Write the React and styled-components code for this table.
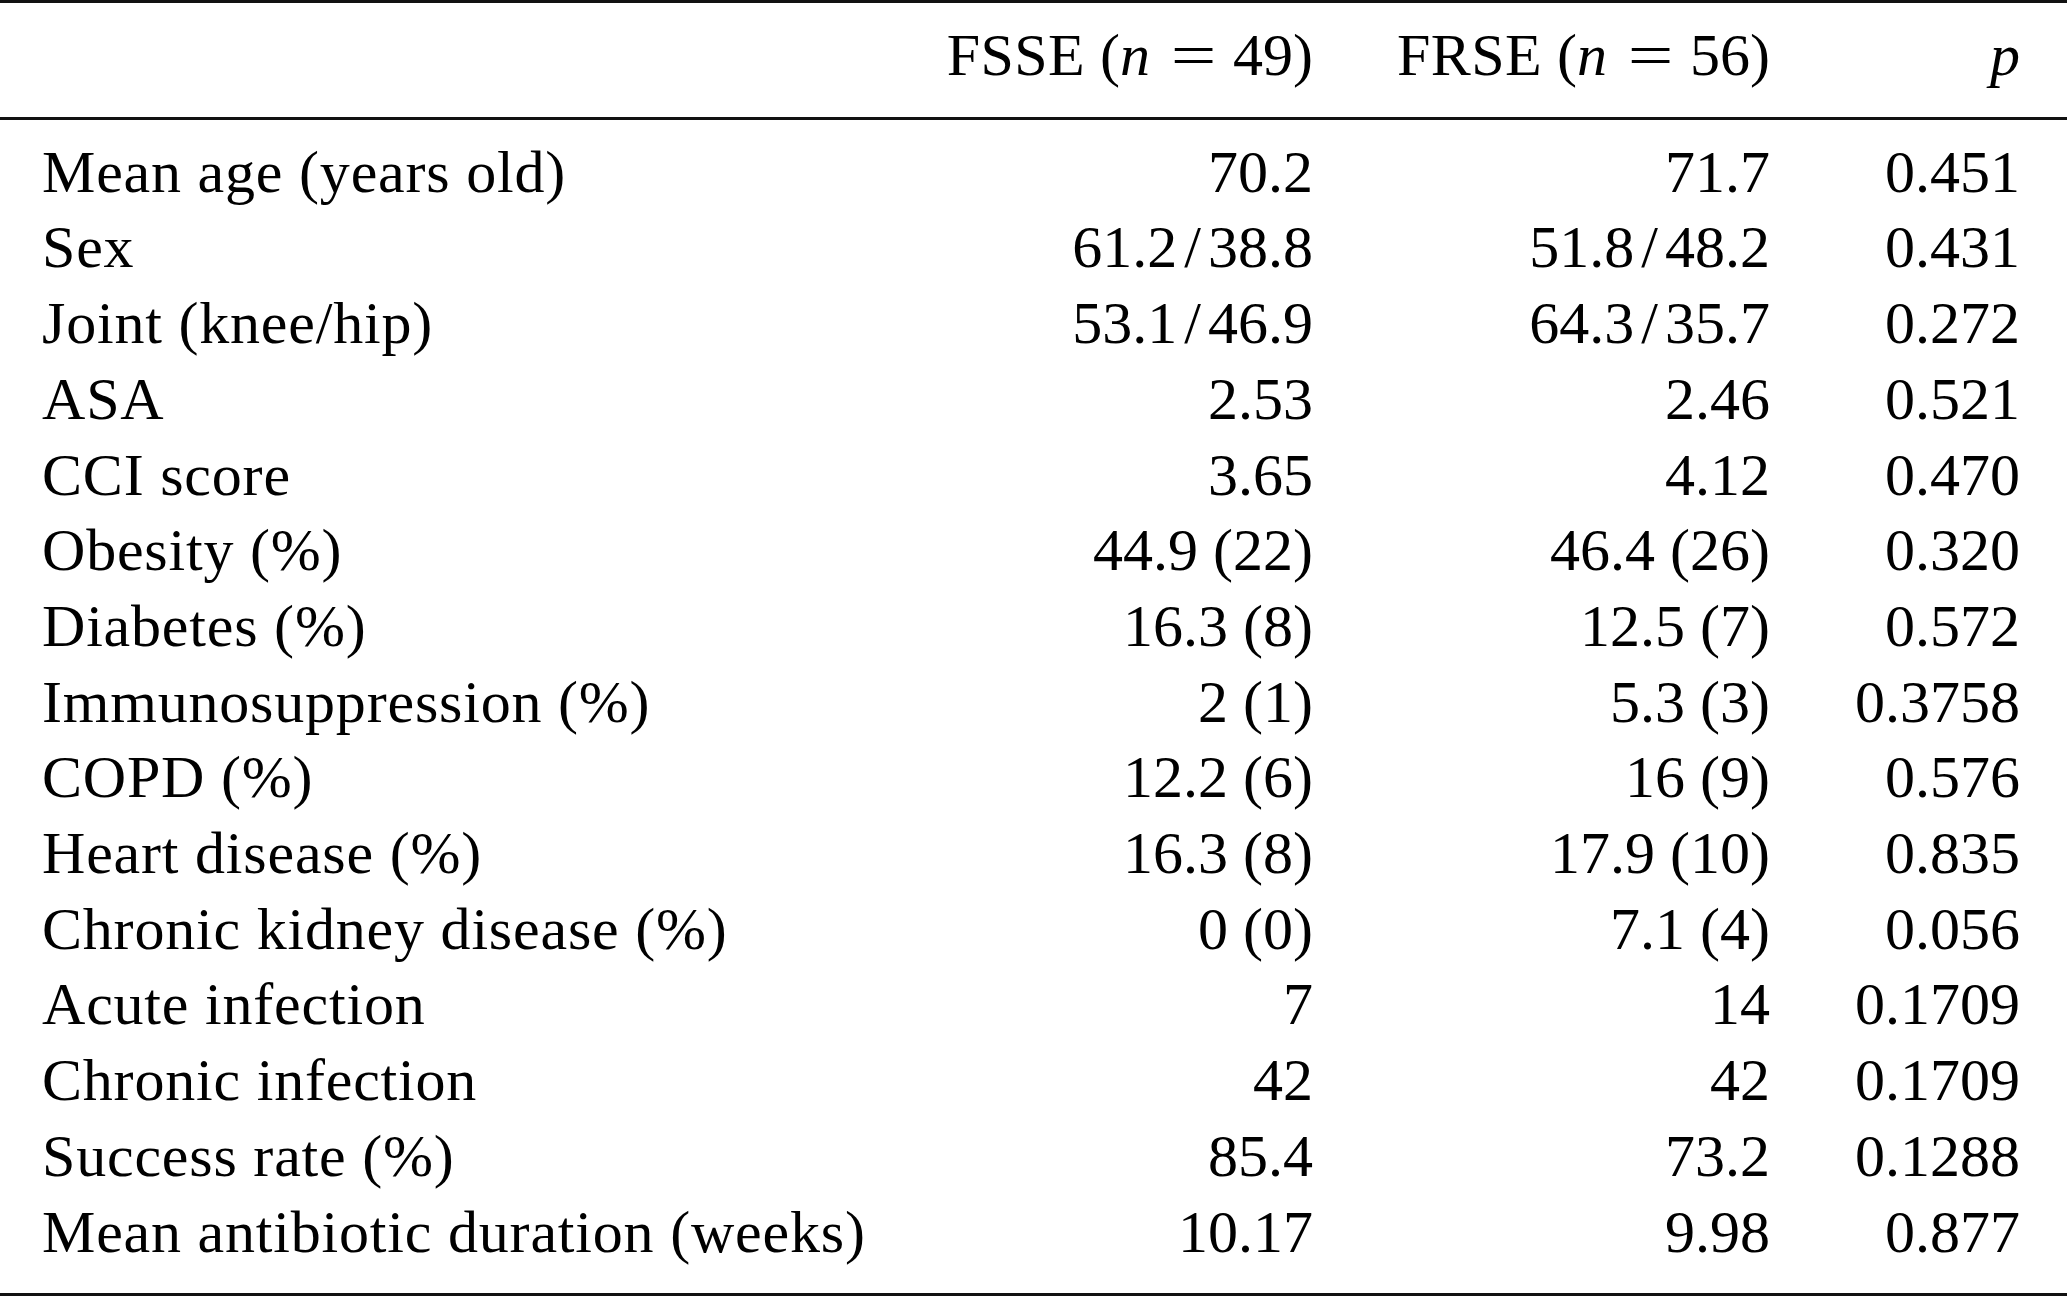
import React from 'react';
import styled, { createGlobalStyle } from 'styled-components';

const GlobalStyle = createGlobalStyle`
  html, body {
    margin: 0;
    padding: 0;
    background: #ffffff;
    overflow: hidden;
  }
  body {
    font-family: "Liberation Serif", "Times New Roman", serif;
    color: #000000;
  }
`;

const Table = styled.div`
  width: 2067px;
  font-size: 60px;
  line-height: 75.7px;
  border-top: 3px solid #111;
  border-bottom: 3px solid #111;
`;

const Section = styled.div`
  padding: ${(p) => (p.$head ? '15px 0 23.4px' : '14.6px 0 23px')};
  border-bottom: ${(p) => (p.$head ? '3px solid #111' : 'none')};
`;

const Row = styled.div`
  display: grid;
  grid-template-columns: 1fr 400px 457px 250px;
  padding: 0 47px 0 42px;
  white-space: nowrap;
`;

const Label = styled.div`
  text-align: left;
  letter-spacing: 0.8px;
`;

const Cell = styled.div`
  text-align: right;
`;

const HeadName = styled.span`
  letter-spacing: 0.4px;
`;

const Italic = styled.i`
  font-style: italic;
`;

const Eq = styled.span`
  display: inline-block;
  width: 43px;
  margin: 0 18px 0 22px;
  text-align: center;
  transform: scaleX(1.35);
`;

const Slash = styled.span`
  margin: 0 7px;
`;

const rows = [
  ['Mean age (years old)', '70.2', '71.7', '0.451'],
  ['Sex', '61.2/38.8', '51.8/48.2', '0.431'],
  ['Joint (knee/hip)', '53.1/46.9', '64.3/35.7', '0.272'],
  ['ASA', '2.53', '2.46', '0.521'],
  ['CCI score', '3.65', '4.12', '0.470'],
  ['Obesity (%)', '44.9 (22)', '46.4 (26)', '0.320'],
  ['Diabetes (%)', '16.3 (8)', '12.5 (7)', '0.572'],
  ['Immunosuppression (%)', '2 (1)', '5.3 (3)', '0.3758'],
  ['COPD (%)', '12.2 (6)', '16 (9)', '0.576'],
  ['Heart disease (%)', '16.3 (8)', '17.9 (10)', '0.835'],
  ['Chronic kidney disease (%)', '0 (0)', '7.1 (4)', '0.056'],
  ['Acute infection', '7', '14', '0.1709'],
  ['Chronic infection', '42', '42', '0.1709'],
  ['Success rate (%)', '85.4', '73.2', '0.1288'],
  ['Mean antibiotic duration (weeks)', '10.17', '9.98', '0.877'],
];

function Value({ text }) {
  const parts = text.split('/');
  if (parts.length === 1) return <Cell>{text}</Cell>;
  return (
    <Cell>
      {parts[0]}
      <Slash>/</Slash>
      {parts[1]}
    </Cell>
  );
}

function GroupHead({ name, n }) {
  return (
    <Cell>
      <HeadName>{name}</HeadName> (<Italic>n</Italic>
      <Eq>=</Eq>
      {n})
    </Cell>
  );
}

export default function App() {
  return (
    <>
      <GlobalStyle />
      <Table>
        <Section $head>
          <Row>
            <Label />
            <GroupHead name="FSSE" n={49} />
            <GroupHead name="FRSE" n={56} />
            <Cell>
              <Italic>p</Italic>
            </Cell>
          </Row>
        </Section>
        <Section>
          {rows.map(([label, a, b, p]) => (
            <Row key={label}>
              <Label>{label}</Label>
              <Value text={a} />
              <Value text={b} />
              <Cell>{p}</Cell>
            </Row>
          ))}
        </Section>
      </Table>
    </>
  );
}
